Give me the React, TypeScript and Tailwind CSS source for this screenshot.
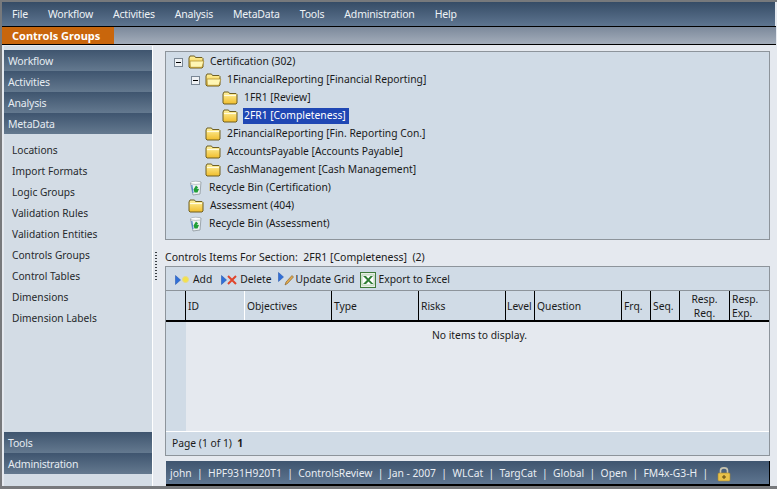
const font = "[font-family:'Noto_Sans',sans-serif]";

const Folder = ({ open = false }: { open?: boolean }) => (
  <svg width="17" height="14" viewBox="0 0 17 14" className="shrink-0">
    <defs>
      <linearGradient id="fg" x1="0" y1="0" x2="0" y2="1">
        <stop offset="0" stopColor="#fff3a0" />
        <stop offset="1" stopColor="#f0bd2c" />
      </linearGradient>
    </defs>
    <path d="M1 3 L2 1 H6.5 L7.5 2.5 H14 L15 3.5 V12 L14 13 H2 L1 12 Z" fill="url(#fg)" stroke="#6f5f22" strokeWidth="1" />
    {open ? (
      <path d="M2 6 H15.8 L14 12.3 H2.4 Z" fill="#fff6b4" stroke="#a98a2a" strokeWidth="0.7" />
    ) : (
      <path d="M2 4.5 H14" stroke="#fffbe0" strokeWidth="1.2" fill="none" />
    )}
  </svg>
);

const Bin = () => (
  <svg width="16" height="16" viewBox="0 0 16 16" className="shrink-0">
    <path d="M2.5 3 L13 2 L12 14 L5 15 Z" fill="#eef1f2" stroke="#8b959c" strokeWidth="0.8" />
    <ellipse cx="7.8" cy="2.8" rx="5.2" ry="1.6" fill="#fbfcfc" stroke="#9aa3a8" strokeWidth="0.6" />
    <path d="M5.5 9.5 L8 5.5 L10.2 7.5 L8.5 8.5 L11 9 L9.5 12.5 L6.5 12.5 Z" fill="#1f9e35" />
    <path d="M3.8 5 L5 13" stroke="#4f86cc" strokeWidth="1.2" />
  </svg>
);

const Toggle = () => (
  <span className="w-[9px] h-[9px] shrink-0 border border-[#7a8794] bg-[#eef1f4] flex items-center justify-center">
    <span className="w-[5px] h-px bg-black" />
  </span>
);

const tree: { label: string; indent: string; toggle?: boolean; open?: boolean; bin?: boolean; sel?: boolean }[] = [
  { label: "Certification (302)", indent: "pl-[8px]", toggle: true, open: true },
  { label: "1FinancialReporting [Financial Reporting]", indent: "pl-[25px]", toggle: true, open: true },
  { label: "1FR1 [Review]", indent: "pl-[56px]" },
  { label: "2FR1 [Completeness]", indent: "pl-[56px]", sel: true },
  { label: "2FinancialReporting [Fin. Reporting Con.]", indent: "pl-[39px]" },
  { label: "AccountsPayable [Accounts Payable]", indent: "pl-[39px]" },
  { label: "CashManagement [Cash Management]", indent: "pl-[39px]" },
  { label: "Recycle Bin (Certification)", indent: "pl-[22px]", bin: true },
  { label: "Assessment (404)", indent: "pl-[22px]" },
  { label: "Recycle Bin (Assessment)", indent: "pl-[22px]", bin: true },
];

const Arrow = () => (
  <svg width="6" height="10" viewBox="0 0 6 10" className="shrink-0">
    <path d="M0.5 0.5 L5.5 5 L0.5 9.5 Z" fill="#2f6fd8" stroke="#1d4fa8" strokeWidth="0.5" />
  </svg>
);

const Col = ({ w, children, center, line = "border-black" }: { w: string; children?: React.ReactNode; center?: boolean; line?: string }) => (
  <div className={`${w} shrink-0 border-r ${line} flex items-center leading-[14px] pt-[1px] ${center ? "justify-center text-center" : "pl-[2px]"}`}>
    {children}
  </div>
);

const SideHead = ({ label }: { label: string }) => (
  <div className="h-[21px] flex items-center pt-[2px] pl-[4px] text-[10.5px] tracking-[-0.2px] text-[#e6ecf2] bg-gradient-to-b from-[#3f556f] to-[#64798f]">
    {label}
  </div>
);

export default function App() {
  return (
    <div className={`${font} w-[777px] h-[489px] overflow-hidden bg-[#e5e9ef] flex flex-col text-[10.3px] text-[#1a1a1a]`}>
      <div className="h-[2px] bg-[#77797c] shrink-0" />
      <div className="flex-1 min-h-0 flex flex-col border-l-2 border-b-[3px] border-[#77797c]">
        <div className="h-[24px] shrink-0 mr-[2px] pt-[2px] bg-gradient-to-b from-[#364c66] to-[#5e7590] flex items-center text-[10.5px] tracking-[-0.2px] text-[#eef2f6]">
          <span className="ml-[10px]">File</span>
          <span className="ml-[20px]">Workflow</span>
          <span className="ml-[20px]">Activities</span>
          <span className="ml-[20px]">Analysis</span>
          <span className="ml-[20px]">MetaData</span>
          <span className="ml-[20px]">Tools</span>
          <span className="ml-[20px]">Administration</span>
          <span className="ml-[20px]">Help</span>
        </div>
        <div className="h-[19px] shrink-0 mr-[1px] border-y border-black bg-gradient-to-b from-[#7c899b] to-[#a3adba] flex">
          <div className="w-[112px] bg-[#c9660c] text-white font-bold text-[11px] flex items-center pt-[2px] pl-[10px]">Controls Groups</div>
        </div>
        <div className="flex-1 min-h-0 flex pl-[2px] pr-[7px] mt-[1px]">
          {/* sidebar */}
          <div className="w-[148px] shrink-0 flex flex-col pt-[4px] pb-[12px] bg-[#d3dce5]">
            <SideHead label="Workflow" />
            <SideHead label="Activities" />
            <SideHead label="Analysis" />
            <SideHead label="MetaData" />
            <div className="flex-1 flex flex-col pt-[6px] pl-[8px] text-[#26292c] text-[10.2px]">
              {["Locations", "Import Formats", "Logic Groups", "Validation Rules", "Validation Entities", "Controls Groups", "Control Tables", "Dimensions", "Dimension Labels"].map((t) => (
                <div key={t} className="h-[21px] flex items-center">{t}</div>
              ))}
            </div>
            <SideHead label="Tools" />
            <SideHead label="Administration" />
          </div>
          {/* splitter */}
          <div className="w-[13px] shrink-0 flex items-center">
            <div className="w-[1px] h-full bg-[#fff]" />
            <div className="ml-[2px] flex flex-col gap-[2px]">
              {Array.from({ length: 10 }).map((_, i) => (
                <span key={i} className="w-[2px] h-[1px] bg-[#3a3f44]" />
              ))}
            </div>
          </div>
          {/* main */}
          <div className="flex-1 min-w-0 flex flex-col pt-[5px]">
            <div className="h-[189px] shrink-0 border border-[#8d949b] bg-[#d0dbe6] pt-[1px]">
              {tree.map((n) => (
                <div key={n.label} className={`h-[18px] flex items-center ${n.indent}`}>
                  {n.toggle && <span className="mr-[5px] flex"><Toggle /></span>}
                  {n.bin ? <Bin /> : <Folder open={n.open} />}
                  <span className={`ml-[4px] pl-[1px] ${n.sel ? "pr-[3px] bg-[#1f47b4] text-white" : "pr-[1px]"}`}>{n.label}</span>
                </div>
              ))}
            </div>
            <div className="h-[26px] shrink-0 flex items-end text-[10.5px] whitespace-pre">Controls Items For Section:  2FR1 [Completeness]  (2)</div>
            <div className="flex-1 min-h-0 flex flex-col border border-[#8d949b] mb-[5px]">
              <div className="h-[24px] shrink-0 bg-[#d0dbe6] border-b border-[#8d949b] flex items-center pt-[2px] pl-[9px] text-[10.3px]">
                <Arrow />
                <span className="w-[7px] h-[7px] ml-[1px] rounded-full bg-[#f3e24a] border border-[#e8d98a]" />
                <span className="ml-[4px]">Add</span>
                <span className="ml-[9px] flex"><Arrow /></span>
                <svg width="10" height="10" viewBox="0 0 10 10" className="shrink-0">
                  <path d="M1 1 L9 9 M9 1 L1 9" stroke="#e0452c" strokeWidth="2" />
                </svg>
                <span className="ml-[3px]">Delete</span>
                <span className="ml-[6px] flex -mt-[5px]"><Arrow /></span>
                <svg width="10" height="12" viewBox="0 0 10 12" className="shrink-0 mt-[1px]">
                  <path d="M1 11 L2 8 L8 1.5 L9.5 3 L3.5 9.5 Z" fill="#e2a94a" stroke="#7a5a2a" strokeWidth="0.6" />
                </svg>
                <span className="ml-[2px]">Update Grid</span>
                <svg width="16" height="16" viewBox="0 0 16 16" className="ml-[5px] shrink-0">
                  <rect x="0.5" y="0.5" width="15" height="15" fill="#e8efe4" stroke="#3f7a3a" />
                  <rect x="2" y="3" width="12" height="10" fill="#fff" stroke="#79a678" strokeWidth="0.5" />
                  <path d="M3 4 L7 8 L3 12 H6 L8.5 9.5 L11 12 H13.5 L9.5 8 L13 4 H10.5 L8.2 6.5 L6 4 Z" fill="#2e7d32" />
                </svg>
                <span className="ml-[3px]">Export to Excel</span>
              </div>
              <div className="h-[31px] shrink-0 bg-[#d0dbe6] border-b-2 border-black flex text-[10.3px]">
                <Col w="w-[20px]" />
                <Col w="w-[59px]" line="border-white">ID</Col>
                <Col w="w-[87px]">Objectives</Col>
                <Col w="w-[87px]">Type</Col>
                <Col w="w-[87px]">Risks</Col>
                <Col w="w-[29px]"><span className="-ml-[1px]">Level</span></Col>
                <Col w="w-[87px]">Question</Col>
                <Col w="w-[29px]">Frq.</Col>
                <Col w="w-[29px]">Seq.</Col>
                <Col w="w-[50px]" center>Resp.<br />Req.</Col>
                <div className="flex-1 flex items-center pl-[2px] pt-[1px] leading-[14px]">Resp.<br />Exp.</div>
              </div>
              <div className="flex-1 min-h-0 flex bg-[#e5e9ef]">
                <div className="w-[20px] shrink-0 bg-[#d0dbe6]" />
                <div className="flex-1 text-center pt-[6px] text-[10.3px]"><span className="ml-[4px]">No items to display.</span></div>
              </div>
              <div className="h-[24px] shrink-0 bg-[#d0dbe6] border-t border-white flex items-center pl-[6px] text-[10.3px]">
                Page (1 of 1)&nbsp;&nbsp;<b className="font-bold">1</b>
              </div>
            </div>
            <div className="h-[25px] shrink-0 border-b-2 border-r border-black ml-px bg-gradient-to-b from-[#3f556f] to-[#5e7590] text-[#e8edf3] text-[10.3px] flex items-center pt-[2px] pl-[4px] whitespace-pre">
              john  |  HPF931H920T1  |  ControlsReview  |  Jan - 2007  |  WLCat  |  TargCat  |  Global  |  Open  |  FM4x-G3-H  |
              <svg width="14" height="16" viewBox="0 0 14 16" className="ml-[9px] shrink-0">
                <path d="M3.5 7 V4.5 C3.5 1 10.5 1 10.5 4.5 V7" fill="none" stroke="#c9c5b0" strokeWidth="1.6" />
                <rect x="1" y="7" width="12" height="8" rx="1" fill="#e9c24a" stroke="#a8862c" strokeWidth="0.6" />
                <path d="M7 9 V13 M5 11 H9" stroke="#5a4510" strokeWidth="1" />
              </svg>
            </div>
          </div>
        </div>
      </div>
    </div>
  );
}
